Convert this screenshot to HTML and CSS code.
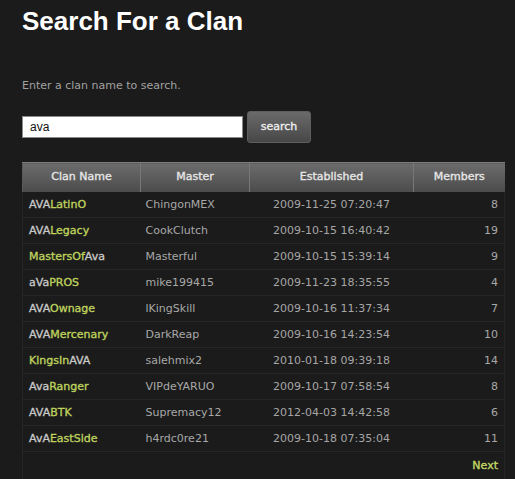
FILE: index.html
```html
<!DOCTYPE html>
<html lang="en">
<head>
<meta charset="utf-8">
<title>Search For a Clan</title>
<link rel="stylesheet" href="styles.css">
</head>
<body>
<div class="page">
  <h1 class="title">Search For a Clan</h1>
  <p class="hint">Enter a clan name to search.</p>
  <form class="search">
    <input class="search-input" type="text" value="ava">
    <button class="search-btn" type="button">search</button>
  </form>
  <table class="clans">
    <colgroup>
      <col class="c1"><col class="c2"><col class="c3"><col class="c4">
    </colgroup>
    <thead>
      <tr>
        <th>Clan Name</th>
        <th>Master</th>
        <th>Established</th>
        <th>Members</th>
      </tr>
    </thead>
    <tbody>
      <tr><td class="name"><span class="m">AVA</span><span class="g">LatinO</span></td><td class="master">ChingonMEX</td><td class="date">2009-11-25 07:20:47</td><td class="num">8</td></tr>
      <tr><td class="name"><span class="m">AVA</span><span class="g">Legacy</span></td><td class="master">CookClutch</td><td class="date">2009-10-15 16:40:42</td><td class="num">19</td></tr>
      <tr><td class="name"><span class="g">MastersOf</span><span class="m">Ava</span></td><td class="master">Masterful</td><td class="date">2009-10-15 15:39:14</td><td class="num">9</td></tr>
      <tr><td class="name"><span class="m">aVa</span><span class="g">PROS</span></td><td class="master">mike199415</td><td class="date">2009-11-23 18:35:55</td><td class="num">4</td></tr>
      <tr><td class="name"><span class="m">AVA</span><span class="g">Ownage</span></td><td class="master">lKingSkill</td><td class="date">2009-10-16 11:37:34</td><td class="num">7</td></tr>
      <tr><td class="name"><span class="m">AVA</span><span class="g">Mercenary</span></td><td class="master">DarkReap</td><td class="date">2009-10-16 14:23:54</td><td class="num">10</td></tr>
      <tr><td class="name"><span class="g">KingsIn</span><span class="m">AVA</span></td><td class="master">salehmix2</td><td class="date">2010-01-18 09:39:18</td><td class="num">14</td></tr>
      <tr><td class="name"><span class="m">Ava</span><span class="g">Ranger</span></td><td class="master">VIPdeYARUO</td><td class="date">2009-10-17 07:58:54</td><td class="num">8</td></tr>
      <tr><td class="name"><span class="m">AVA</span><span class="g">BTK</span></td><td class="master">Supremacy12</td><td class="date">2012-04-03 14:42:58</td><td class="num">6</td></tr>
      <tr><td class="name"><span class="m">AvA</span><span class="g">EastSide</span></td><td class="master">h4rdc0re21</td><td class="date">2009-10-18 07:35:04</td><td class="num">11</td></tr>
    </tbody>
    <tfoot>
      <tr><td class="pager" colspan="4"><a class="next" href="#">Next</a></td></tr>
    </tfoot>
  </table>
</div>
</body>
</html>
```

FILE: styles.css
```css
html, body {
  margin: 0;
  padding: 0;
  background: #1b1b1b;
}
body {
  font-family: "DejaVu Sans", Verdana, sans-serif;
  font-size: 11px;
  color: #a8a8a8;
}
.page {
  padding: 6px 0 0 22px;
}
.title {
  margin: 0;
  font-family: "Liberation Sans", Arial, sans-serif;
  font-size: 26px;
  line-height: 30px;
  font-weight: bold;
  color: #ffffff;
}
.hint {
  margin: 43px 0 0;
  line-height: 14px;
  color: #a2a2a2;
}
.search {
  display: flex;
  align-items: center;
  gap: 4px;
  margin: 18px 0 0;
}
.search-input {
  box-sizing: border-box;
  width: 221px;
  height: 22px;
  margin: 0;
  padding: 0 7px;
  border: 1px solid #8a8a8a;
  background: #ffffff;
  font-family: "Liberation Sans", Arial, sans-serif;
  font-size: 12px;
  color: #111;
  outline: none;
}
.search-btn {
  box-sizing: border-box;
  width: 64px;
  height: 32px;
  margin: 0;
  padding: 0 0 2px;
  border: 1px solid #5e5e5e;
  border-radius: 3px;
  background: linear-gradient(#6a6a6a, #474747);
  font-family: "DejaVu Sans", Verdana, sans-serif;
  font-size: 11px;
  color: #eeeeee;
  -webkit-text-stroke: 0.35px #eeeeee;
}
.clans {
  margin-top: 19px;
  width: 482px;
  border-collapse: collapse;
  table-layout: fixed;
}
.c1 { width: 118px; }
.c2 { width: 109px; }
.c3 { width: 164px; }
.c4 { width: 91px; }
.clans th {
  box-sizing: border-box;
  height: 29px;
  padding: 0 0 1px;
  background: linear-gradient(#6c6c6c, #4b4b4b);
  border-top: 1px solid #7e7e7e;
  border-left: 1px solid #787878;
  text-align: center;
  font-weight: normal;
  color: #e6e6e6;
  -webkit-text-stroke: 0.35px #e6e6e6;
}
.clans th:first-child {
  border-left: 1px solid #5a5a5a;
}
.clans td {
  height: 25px;
  padding: 0;
  border-bottom: 1px solid #262626;
  white-space: nowrap;
}
.clans tbody tr,
.clans tfoot tr {
  border-left: 1px solid #242424;
  border-right: 1px solid #242424;
}
.name {
  padding-left: 6px !important;
  -webkit-text-stroke: 0.35px currentColor;
}
.m { color: #c9c9c9; }
.g { color: #bfd25e; }
.master {
  padding-left: 5px !important;
  color: #a8a8a8;
}
.date {
  text-align: center;
  color: #a6a6a6;
}
.num {
  text-align: right;
  padding-right: 6px !important;
  color: #a8a8a8;
}
.pager {
  height: 27px !important;
  text-align: right;
  padding-right: 6px !important;
  border-bottom: none !important;
}
.next {
  color: #c4d766;
  text-decoration: none;
  -webkit-text-stroke: 0.35px #c4d766;
}
```
